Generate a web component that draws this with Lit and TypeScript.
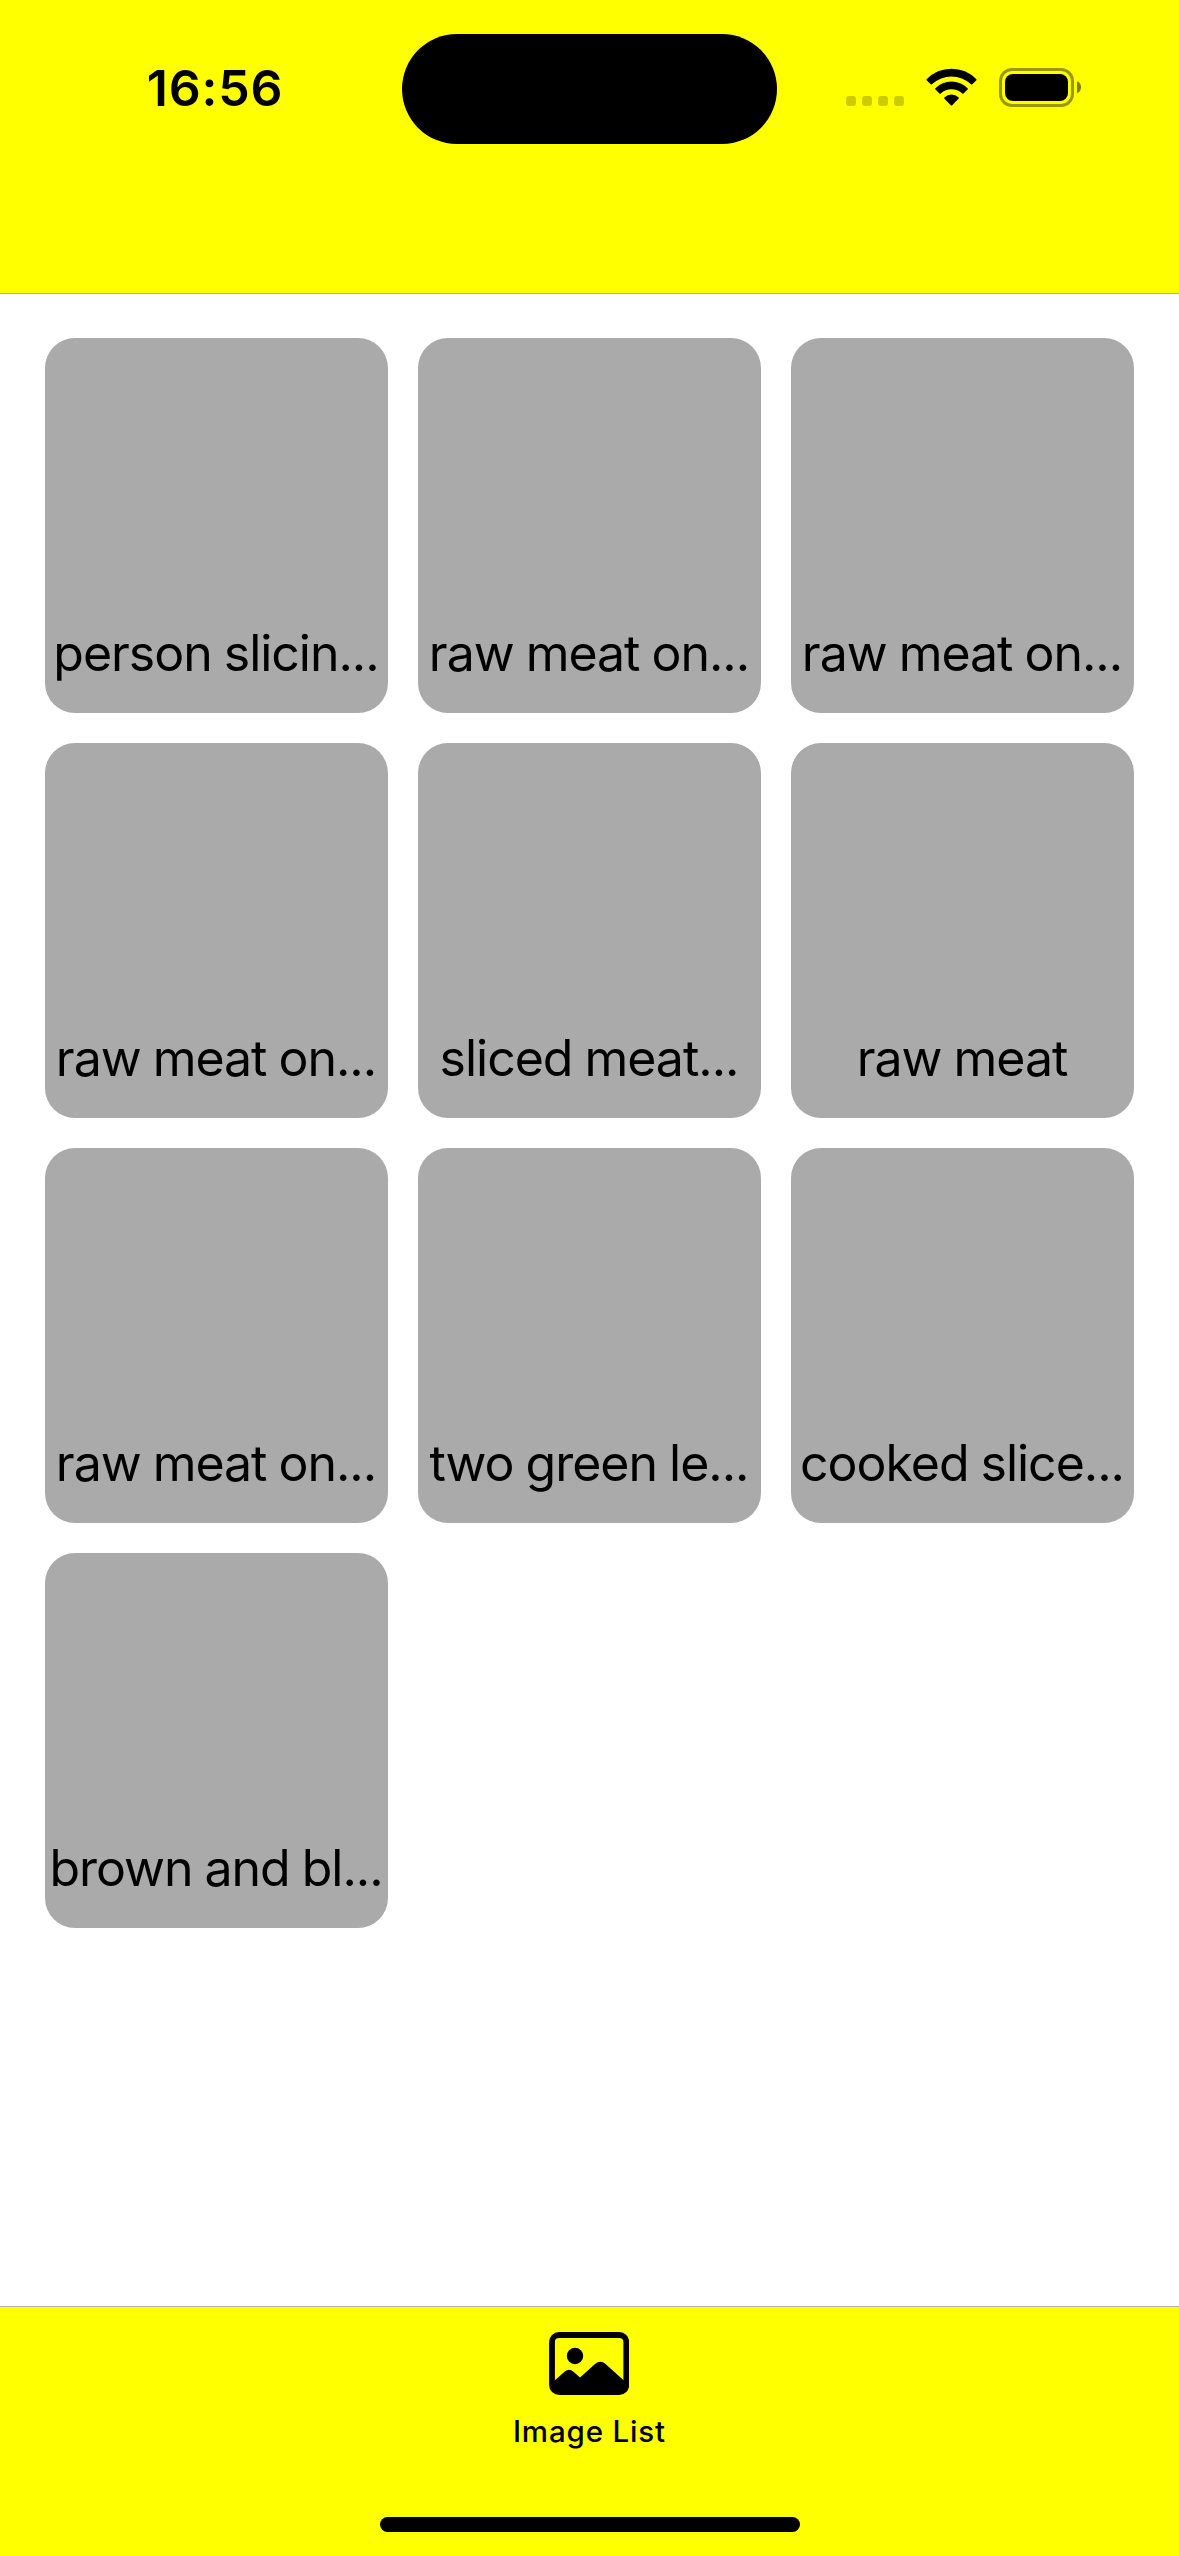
import { LitElement, html, css } from "lit";
import { customElement, property } from "lit/decorators.js";

const CAPTIONS: string[] = [
  "person slicin...",
  "raw meat on...",
  "raw meat on...",
  "raw meat on...",
  "sliced meat...",
  "raw meat",
  "raw meat on...",
  "two green le...",
  "cooked slice...",
  "brown and bl...",
];

@customElement("status-bar")
export class StatusBar extends LitElement {
  static styles = css`
    :host {
      display: grid;
      grid-template-columns: 402px 375px 1fr;
      height: 178px;
      box-sizing: border-box;
      padding-top: 34px;
    }
    .time {
      padding-left: 28px;
      height: 108px;
      display: flex;
      align-items: center;
      justify-content: center;
      font-size: 50px;
      font-weight: 600;
      line-height: 60px;
      letter-spacing: 0.8px;
    }
    .island {
      height: 110px;
      border-radius: 55px;
      background: #000;
    }
    .icons {
      height: 109px;
      padding-left: 69px;
      display: flex;
      align-items: center;
    }
    svg {
      display: block;
    }
  `;

  render() {
    return html`
      <div class="time">16:56</div>
      <div class="island"></div>
      <div class="icons">
        <svg width="240" height="45" viewBox="846 66 240 45">
          <g fill="#000" fill-opacity="0.2">
            <rect x="846" y="96" width="10" height="10" rx="3" />
            <rect x="862" y="96" width="10" height="10" rx="3" />
            <rect x="878" y="96" width="10" height="10" rx="3" />
            <rect x="894" y="96" width="10" height="10" rx="3" />
          </g>
          <path d="M926.6 79.2Q937 68.8 951.5 68.8T976.4 79.2Q976.9 79.8 976.4 80.3L972.3 84.3Q971.7 84.8 971.1 84.3Q962.5 76.4 951.5 76.4T931.9 84.3Q931.3 84.8 930.7 84.3L926.6 80.3Q926.1 79.8 926.6 79.2Z" />
          <path d="M935.4 88.2Q942.3 81.6 951.5 81.6T967.6 88.2Q968.2 88.8 967.6 89.4L963.5 93.4Q962.9 93.9 962.3 93.4Q957.4 89.2 951.5 89.2T940.7 93.4Q940.1 93.9 939.5 93.4L935.4 89.4Q934.8 88.8 935.4 88.2Z" />
          <path d="M944.3 97.4Q947.4 94.5 951.5 94.5T958.7 97.4Q959.2 98 958.7 98.6L952.2 105.2Q951.5 105.9 950.8 105.2L944.3 98.6Q943.8 98 944.3 97.4Z" />
          <rect x="1000.5" y="69.5" width="72" height="36" rx="11.5" fill="none" stroke="#000" stroke-opacity="0.4" stroke-width="3" />
          <rect x="1005" y="74" width="63" height="27" rx="8" />
          <path d="M1077 81.3Q1081 83 1081 87.3T1077 93.3Z" fill-opacity="0.5" />
        </svg>
      </div>
    `;
  }
}

@customElement("image-card")
export class ImageCard extends LitElement {
  @property() caption = "";

  static styles = css`
    :host {
      display: flex;
      flex-direction: column;
      justify-content: flex-end;
      align-items: center;
      box-sizing: border-box;
      height: 375px;
      padding: 0 1px 30px 0;
      border-radius: 30px;
      background: #aaa;
    }
    .caption {
      font-size: 50px;
      line-height: 60px;
      letter-spacing: -1.02px;
      word-spacing: -1px;
      white-space: nowrap;
    }
  `;

  render() {
    return html`<div class="caption">${this.caption}</div>`;
  }
}

@customElement("tab-bar")
export class TabBar extends LitElement {
  static styles = css`
    :host {
      display: flex;
      flex-direction: column;
      align-items: center;
      box-sizing: border-box;
      height: 250px;
      border-top: 1px solid #b2b2b2;
      background: #ff0;
    }
    .tab {
      display: flex;
      flex-direction: column;
      align-items: center;
      padding-top: 25px;
    }
    .icon {
      display: block;
    }
    .label {
      margin-top: 18px;
      font-size: 29.5px;
      font-weight: 500;
      line-height: 36px;
      letter-spacing: 0.85px;
    }
    .home {
      width: 420px;
      height: 15px;
      margin-top: auto;
      margin-bottom: 24px;
      border-radius: 8px;
      background: #000;
    }
  `;

  render() {
    return html`
      <div class="tab">
        <svg class="icon" width="80" height="63" viewBox="0 0 80 63">
          <rect x="3" y="3" width="74.3" height="57" rx="7" fill="none" stroke="#000" stroke-width="5.8" />
          <circle cx="26" cy="24" r="8.2" />
          <path d="M4 50L15.5 39.7Q20 36 24.5 39.7L31 45.5L46 32Q51.3 27.6 56.6 32L76 49.5V56Q76 60 70 60H10Q4 60 4 55Z" />
        </svg>
        <div class="label">Image List</div>
      </div>
      <div class="home"></div>
    `;
  }
}

@customElement("app-root")
export class AppRoot extends LitElement {
  static styles = css`
    :host {
      display: flex;
      flex-direction: column;
      width: 1179px;
      height: 2556px;
      overflow: hidden;
      background: #fff;
      color: #000;
      font-family: Inter, "Liberation Sans", sans-serif;
    }
    .header {
      flex: none;
      box-sizing: border-box;
      height: 294px;
      border-bottom: 1px solid #b2b2b2;
      background: #ff0;
    }
    .content {
      flex: 1;
      display: grid;
      grid-template-columns: repeat(3, 343px);
      grid-auto-rows: 375px;
      gap: 30px;
      padding: 44px 45px 0;
    }
  `;

  render() {
    return html`
      <header class="header"><status-bar></status-bar></header>
      <main class="content">
        ${CAPTIONS.map((c) => html`<image-card .caption=${c}></image-card>`)}
      </main>
      <tab-bar></tab-bar>
    `;
  }
}
